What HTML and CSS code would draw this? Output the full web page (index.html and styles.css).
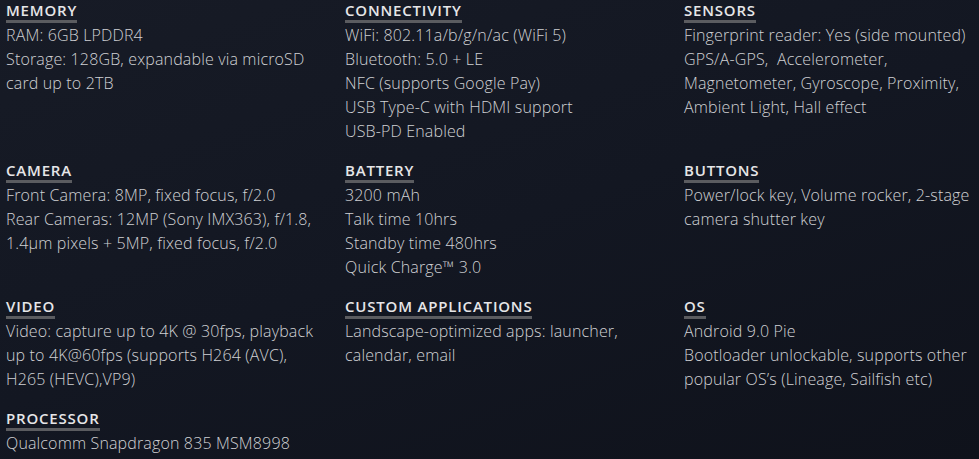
FILE: index.html
```html
<!DOCTYPE html>
<html>
<head>
<meta charset="utf-8">
<link rel="stylesheet" href="styles.css">
</head>
<body>
<div class="specs">
  <section class="spec">
    <h3 class="spec-title">Memory</h3>
    <p class="spec-line">RAM: 6GB LPDDR4</p>
    <p class="spec-line">Storage: 128GB, expandable via microSD card up to 2TB</p>
  </section>
  <section class="spec">
    <h3 class="spec-title">Connectivity</h3>
    <p class="spec-line">WiFi: 802.11a/b/g/n/ac (WiFi 5)</p>
    <p class="spec-line">Bluetooth: 5.0 + LE</p>
    <p class="spec-line">NFC (supports Google Pay)</p>
    <p class="spec-line">USB Type-C with HDMI support</p>
    <p class="spec-line">USB-PD Enabled</p>
  </section>
  <section class="spec">
    <h3 class="spec-title">Sensors</h3>
    <p class="spec-line">Fingerprint reader: Yes (side mounted)</p>
    <p class="spec-line">GPS/A-GPS,&nbsp; Accelerometer, Magnetometer, Gyroscope, Proximity, Ambient Light, Hall effect</p>
  </section>
  <section class="spec">
    <h3 class="spec-title">Camera</h3>
    <p class="spec-line">Front Camera: 8MP, fixed focus, f/2.0</p>
    <p class="spec-line">Rear Cameras: 12MP (Sony IMX363), f/1.8, 1.4µm pixels + 5MP, fixed focus, f/2.0</p>
  </section>
  <section class="spec">
    <h3 class="spec-title">Battery</h3>
    <p class="spec-line">3200 mAh</p>
    <p class="spec-line">Talk time 10hrs</p>
    <p class="spec-line">Standby time 480hrs</p>
    <p class="spec-line">Quick Charge™ 3.0</p>
  </section>
  <section class="spec">
    <h3 class="spec-title">Buttons</h3>
    <p class="spec-line">Power/lock key, Volume rocker, <span class="nowrap">2-stage</span> camera shutter key</p>
  </section>
  <section class="spec">
    <h3 class="spec-title">Video</h3>
    <p class="spec-line">Video: capture up to 4K @ 30fps, playback up to 4K@60fps (supports H264 (AVC), H265 (HEVC),VP9)</p>
  </section>
  <section class="spec">
    <h3 class="spec-title">Custom Applications</h3>
    <p class="spec-line">Landscape-optimized apps: launcher, calendar, email</p>
  </section>
  <section class="spec">
    <h3 class="spec-title">OS</h3>
    <p class="spec-line">Android 9.0 Pie</p>
    <p class="spec-line">Bootloader unlockable, supports other popular OS’s (Lineage, Sailfish etc)</p>
  </section>
  <section class="spec">
    <h3 class="spec-title">Processor</h3>
    <p class="spec-line">Qualcomm Snapdragon 835 MSM8998</p>
  </section>
</div>
</body>
</html>
```
FILE: styles.css
```css
html, body {
  margin: 0;
  padding: 0;
  height: 100%;
}
body {
  background: linear-gradient(160deg, #171b26 0%, #131722 50%, #0f121b 100%);
  color: #d0d1d4;
  font-family: "Open Sans", "DejaVu Sans", sans-serif;
  font-weight: 300;
  font-size: 16px;
  letter-spacing: 0.15px;
  overflow: hidden;
}
.specs {
  display: grid;
  grid-template-columns: 339px 339px 1fr;
  row-gap: 18px;
  padding: 1px 0 0 6px;
}
.spec {
  display: flex;
  flex-direction: column;
  align-items: flex-start;
  min-width: 0;
}
.spec-title {
  margin: 0;
  font-size: 15px;
  font-weight: 600;
  line-height: 19px;
  text-transform: uppercase;
  letter-spacing: 0.8px;
  color: #e6e6e8;
  border-bottom: 3px solid #5b5c60;
}
.spec-line {
  margin: 0;
  line-height: 24px;
  max-width: 322px;
}
.nowrap {
  white-space: nowrap;
}
```
